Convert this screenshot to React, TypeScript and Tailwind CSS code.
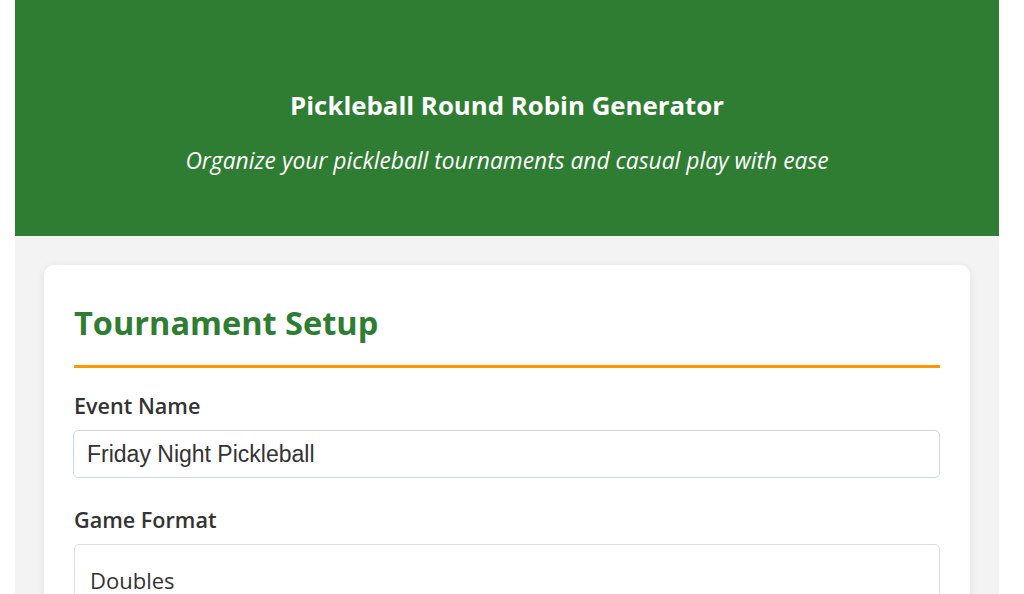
import React, { useState } from 'react';

export default function App() {
  const [eventName, setEventName] = useState('Friday Night Pickleball');
  const [format, setFormat] = useState('doubles');

  return (
    <div className="min-h-screen bg-white" style={{ fontFamily: '"Open Sans", "Noto Sans", sans-serif' }}>
      <div className="ml-[15px] w-[984px] bg-[#f3f3f3] min-h-[594px]">
        {/* Header */}
        <header className="h-[236px] bg-[#2e7d32] text-white flex flex-col items-center justify-center text-center pt-[28px]">
          <h1 className="text-[25.8px] font-bold leading-tight">Pickleball Round Robin Generator</h1>
          <p className="mt-[26px] text-[22.8px] italic leading-tight">Organize your pickleball tournaments and casual play with ease</p>
        </header>

        <main className="p-[29px]">
          <section className="bg-white rounded-[10px] shadow-[0_2px_10px_rgba(0,0,0,0.08)] p-[30px]">
            <h2 className="text-[32.5px] font-bold text-[#2e7d32] leading-[40px] pt-[8px] pb-[22px] border-b-[3px] border-[#ff9800]">
              Tournament Setup
            </h2>

            <div className="mt-[24px]">
              <label className="block text-[21.6px] font-semibold text-[#333] leading-[28px]">Event Name</label>
              <input
                type="text"
                value={eventName}
                onChange={(e) => setEventName(e.target.value)}
                className="mt-[10px] -ml-px w-[calc(100%+1px)] h-[48px] px-[13px] border border-[#cfd8e3] rounded-[5px] text-[23px] text-[#333] outline-none"
                style={{ fontFamily: '"Liberation Sans", Arial, sans-serif' }}
              />
            </div>

            <div className="mt-[28px]">
              <label className="block text-[21.6px] font-semibold text-[#333] leading-[28px]">Game Format</label>
              <select
                value={format}
                onChange={(e) => setFormat(e.target.value)}
                className="mt-[10px] w-full h-[72px] px-[15px] border border-[#dddddd] rounded-[5px] text-[22px] text-[#333] bg-white appearance-none outline-none"
              >
                <option value="doubles">Doubles</option>
                <option value="singles">Singles</option>
              </select>
            </div>
          </section>
        </main>
      </div>
    </div>
  );
}
